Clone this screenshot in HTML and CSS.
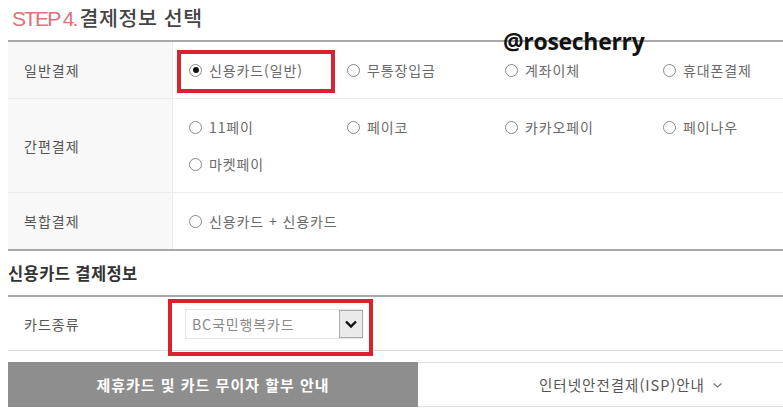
FILE: index.html
```html
<!DOCTYPE html>
<html lang="ko">
<head>
<meta charset="utf-8">
<link rel="stylesheet" href="styles.css">
</head>
<body>
<div class="page">
  <h1 class="title"><span class="step">STEP 4.</span>결제정보 선택</h1>
  <div class="watermark">@rosecherry</div>

  <div class="pay-table">
    <div class="row r1">
      <div class="label">일반결제</div>
      <div class="opts">
        <span class="opt sel"><i class="radio on"></i>신용카드(일반)<span class="mark m1"></span></span>
        <span class="opt"><i class="radio"></i>무통장입금</span>
        <span class="opt"><i class="radio"></i>계좌이체</span>
        <span class="opt"><i class="radio"></i>휴대폰결제</span>
      </div>
    </div>
    <div class="row r2">
      <div class="label">간편결제</div>
      <div class="opts">
        <span class="opt"><i class="radio"></i>11페이</span>
        <span class="opt"><i class="radio"></i>페이코</span>
        <span class="opt"><i class="radio"></i>카카오페이</span>
        <span class="opt"><i class="radio"></i>페이나우</span>
        <span class="opt"><i class="radio"></i>마켓페이</span>
      </div>
    </div>
    <div class="row r3">
      <div class="label">복합결제</div>
      <div class="opts">
        <span class="opt wide"><i class="radio"></i>신용카드 + 신용카드</span>
      </div>
    </div>
  </div>

  <h2 class="sub">신용카드 결제정보</h2>
  <div class="card-table">
    <div class="crow">
      <div class="clabel">카드종류</div>
      <div class="cval">
        <div class="select">
          <span class="sel-text">BC국민행복카드</span>
          <span class="sel-btn"><svg width="14" height="10" viewBox="0 0 14 10"><path d="M2 2.5 L7 7.5 L12 2.5" fill="none" stroke="#111" stroke-width="2.4"/></svg></span>
          <span class="mark m2"></span>
        </div>
      </div>
    </div>
  </div>

  <div class="tabs">
    <div class="tab active">제휴카드 및 카드 무이자 할부 안내</div>
    <div class="tab">인터넷안전결제(ISP)안내 <svg class="chev" width="11" height="7" viewBox="0 0 11 7"><path d="M1.5 1.5 L5.5 5 L9.5 1.5" fill="none" stroke="#777" stroke-width="1.3"/></svg></div>
  </div>
</div>
</body>
</html>
```
FILE: styles.css
```css
* { box-sizing: border-box; }
html, body { margin: 0; padding: 0; background: #fff; overflow: hidden; }
body { font-family: "Noto Sans CJK KR", "Noto Sans", sans-serif; color: #555; }

.page { position: relative; width: 800px; padding-left: 8px; }

.title {
  margin: 0;
  height: 40px;
  padding: 3px 0 0 4px;
  font-size: 20.5px;
  font-weight: 500;
  color: #444;
  letter-spacing: 0.6px;
  line-height: 28px;
}
.step { color: #e0707a; font-family: "Liberation Sans", sans-serif; font-size: 21px; letter-spacing: -1.9px; font-weight: 400; margin-right: 3px; }

.watermark {
  position: absolute;
  left: 503px;
  top: 26px;
  font-family: "Open Sans", "Liberation Sans", sans-serif;
  font-weight: 700;
  font-size: 23px;
  color: #111;
  line-height: 30px;
  letter-spacing: -0.3px;
  z-index: 2;
}

.pay-table { border-top: 2px solid #a8a8a8; border-bottom: 2px solid #a8a8a8; }
.row { display: grid; grid-template-columns: 165px 1fr; border-bottom: 1px solid #ececec; }
.row.r3 { border-bottom: 0; }
.label {
  background: #f8f8f8;
  border-right: 1px solid #ececec;
  padding-left: 16px;
  display: flex; align-items: center;
  font-size: 14px; letter-spacing: 1px; color: #555;
}
.r1 { height: 57px; }
.r2 { height: 94px; }
.r3 { height: 56px; }

.opts {
  display: grid;
  grid-template-columns: repeat(4, 158px);
  padding-left: 16px;
  align-content: center;
  row-gap: 16px;
}
.opt {
  position: relative;
  display: flex; align-items: center;
  font-size: 14px; letter-spacing: 0.9px; color: #6a6a6a; line-height: 21px;
  white-space: nowrap;
}
.opt.wide { grid-column: span 2; }
.radio {
  display: inline-block;
  width: 13px; height: 13px;
  border: 1px solid #8a8a8a;
  border-radius: 50%;
  margin-right: 7px;
  position: relative;
  background: #fff;
  flex: none;
}
.radio.on::after {
  content: "";
  position: absolute;
  left: 2.5px; top: 2.5px;
  width: 6px; height: 6px;
  border-radius: 50%;
  background: #111;
}

.mark { position: absolute; border: 4px solid #d8232f; pointer-events: none; }
.m1 { left: -12px; top: -10px; width: 158px; height: 43px; }
.m2 { left: -18px; top: -11px; width: 205px; height: 57px; }

.sub {
  margin: 0;
  height: 46px;
  display: flex; align-items: center;
  font-size: 16.5px; font-weight: 700; color: #333;
  border-bottom: 2px solid #a8a8a8;
  letter-spacing: 0.4px;
}

.card-table { border-bottom: 1px solid #dcdcdc; }
.crow { display: grid; grid-template-columns: 160px 1fr; height: 53px; }
.clabel { padding-left: 16px; display: flex; align-items: center; font-size: 14px; letter-spacing: 1px; color: #555; }
.cval { display: flex; align-items: center; padding-left: 17px; }
.select {
  position: relative;
  width: 178px; height: 30px;
  border: 1px solid #e4e4e4;
  display: flex; align-items: center; justify-content: space-between;
  padding-left: 6px;
}
.sel-text { font-size: 14px; letter-spacing: 0.9px; color: #888; }
.sel-btn {
  width: 24px; height: 28px;
  background: #eaeaea;
  border: 1px solid #a9a9a9;
  display: flex; align-items: center; justify-content: center;
  margin-right: -1px;
}

.tabs { display: flex; margin-top: 11px; height: 45px; }
.tab {
  display: flex; align-items: center; justify-content: center;
  font-size: 14px;
}
.tab.active { width: 410px; background: #8e8e8e; color: #fff; font-weight: 700; font-size: 15px; letter-spacing: 1px; }
.tab:not(.active) { flex: 1; border-top: 1px solid #e2e2e2; border-bottom: 1px solid #e2e2e2; color: #555; gap: 7px; padding-left: 44px; font-size: 14.5px; letter-spacing: 1px; }
.chev { margin-top: 1px; }
```
